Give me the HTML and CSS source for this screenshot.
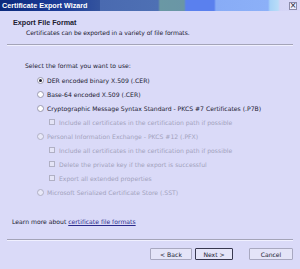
FILE: index.html
```html
<!DOCTYPE html>
<html lang="en">
<head>
    <meta charset="UTF-8">
    <title>Certificate Export Wizard</title>
    <link rel="stylesheet" href="styles.css">
</head>
<body>
    <div class="window">
        <div class="titlebar">
            <span class="title">Certificate Export Wizard</span>
            <span class="close">×</span>
        </div>

        <div class="header">
            <div class="header-title">Export File Format</div>
            <div class="header-sub">Certificates can be exported in a variety of file formats.</div>
        </div>
        <div class="sep"></div>

        <div class="content">
            <div class="prompt">Select the format you want to use:</div>
            <div class="option">
                <span class="radio checked"></span>
                <span>DER encoded binary X.509 (.CER)</span>
            </div>
            <div class="option">
                <span class="radio"></span>
                <span>Base-64 encoded X.509 (.CER)</span>
            </div>
            <div class="option">
                <span class="radio"></span>
                <span>Cryptographic Message Syntax Standard - PKCS #7 Certificates (.P7B)</span>
            </div>
            <div class="option sub disabled">
                <span class="check"></span>
                <span>Include all certificates in the certification path if possible</span>
            </div>
            <div class="option disabled">
                <span class="radio"></span>
                <span>Personal Information Exchange - PKCS #12 (.PFX)</span>
            </div>
            <div class="option sub disabled">
                <span class="check"></span>
                <span>Include all certificates in the certification path if possible</span>
            </div>
            <div class="option sub disabled">
                <span class="check"></span>
                <span>Delete the private key if the export is successful</span>
            </div>
            <div class="option sub disabled">
                <span class="check"></span>
                <span>Export all extended properties</span>
            </div>
            <div class="option disabled">
                <span class="radio"></span>
                <span>Microsoft Serialized Certificate Store (.SST)</span>
            </div>
        </div>

        <div class="learn">Learn more about <a href="#">certificate file formats</a></div>
        <div class="sep"></div>

        <div class="buttons">
            <button class="btn back">&lt; Back</button>
            <button class="btn default">Next &gt;</button>
            <button class="btn cancel">Cancel</button>
        </div>
    </div>
</body>
</html>
```

FILE: styles.css
```css
/* wizard dialog */
body {
    margin: 0;
    padding: 0;
    background-color: #dadaf8;
    font-family: "DejaVu Sans", Verdana, sans-serif;
    font-size: 6.1px;
    color: #202030;
}

.window {
    width: 300px;
    height: 269px;
    display: flex;
    flex-direction: column;
    background-color: #dadaf8;
}

.titlebar {
    height: 11px;
    display: flex;
    align-items: center;
    justify-content: space-between;
    padding: 0 3px 0 2px;
    background: linear-gradient(to right,
        #0b2a7c 0px, #1c3c98 60px, #34549e 100px,
        #4a6ab0 100px, #4e70b4 158px,
        #6a98a4 160px, #6a96a6 184px,
        #5a80ee 186px, #5a80ee 214px,
        #88acf6 216px, #8cb0f8 268px,
        #a6d2f8 270px, #b8dcf8 278px,
        #d4d4f6 280px, #d8d8f8 300px);
}

.title {
    color: #fff;
    font-family: "Liberation Sans", Arial, sans-serif;
    font-weight: bold;
    font-size: 7.2px;
}

.close {
    width: 8px;
    height: 8px;
    display: flex;
    align-items: center;
    justify-content: center;
    border: 1px solid #8a8aa8;
    background-color: #ececfc;
    color: #202030;
    font-size: 8px;
    line-height: 8px;
    box-sizing: border-box;
}

.header {
    height: 33px;
    padding: 0 13px;
    display: flex;
    flex-direction: column;
    justify-content: center;
}

.header-title {
    font-family: "Liberation Sans", Arial, sans-serif;
    font-weight: bold;
    font-size: 7.2px;
    height: 10px;
    line-height: 10px;
}

.header-sub {
    padding-left: 13px;
    height: 10px;
    line-height: 10px;
    letter-spacing: -0.1px;
}

.sep {
    margin: 0 7px;
    height: 1px;
    background-color: #a4a4b8;
    border-bottom: 1px solid #f0f0ff;
}

.content {
    padding: 13px 0 0 25px;
    height: 154px;
}

.prompt {
    height: 14px;
    line-height: 14px;
}

.option {
    height: 14px;
    display: flex;
    align-items: center;
    gap: 3px;
    padding-left: 12px;
}

.option.sub {
    padding-left: 24px;
    gap: 4px;
}

.disabled {
    color: #a2a2bc;
}

.radio {
    width: 7px;
    height: 7px;
    border-radius: 50%;
    border: 1px solid #9a9ab0;
    background-color: #fff;
    box-sizing: border-box;
    display: flex;
    align-items: center;
    justify-content: center;
    flex-shrink: 0;
}

.radio.checked::after {
    content: "";
    width: 3px;
    height: 3px;
    border-radius: 50%;
    background-color: #202030;
}

.option.disabled .radio {
    background-color: #e8e8f8;
    border-color: #b0b0c4;
}

.check {
    width: 6px;
    height: 6px;
    border: 1px solid #b0b0c4;
    background-color: #e4e4f6;
    box-sizing: border-box;
    flex-shrink: 0;
}

.learn {
    height: 26px;
    line-height: 18px;
    padding-left: 12px;
}

.learn a {
    color: #2a2a8c;
    text-decoration: underline;
}

.buttons {
    display: flex;
    justify-content: flex-end;
    padding: 7px 7px 0 0;
}

.btn {
    font-family: "DejaVu Sans", Verdana, sans-serif;
    font-size: 6.1px;
    color: #202030;
    width: 42px;
    height: 12px;
    padding: 0;
    margin: 0;
    background-color: #e4e4f8;
    border: 1px solid #a8a8c0;
    border-radius: 1px;
}

.btn.default {
    width: 38px;
    border-color: #383850;
    margin-left: 3px;
}

.btn.cancel {
    width: 44px;
    margin-left: 16px;
}
```
